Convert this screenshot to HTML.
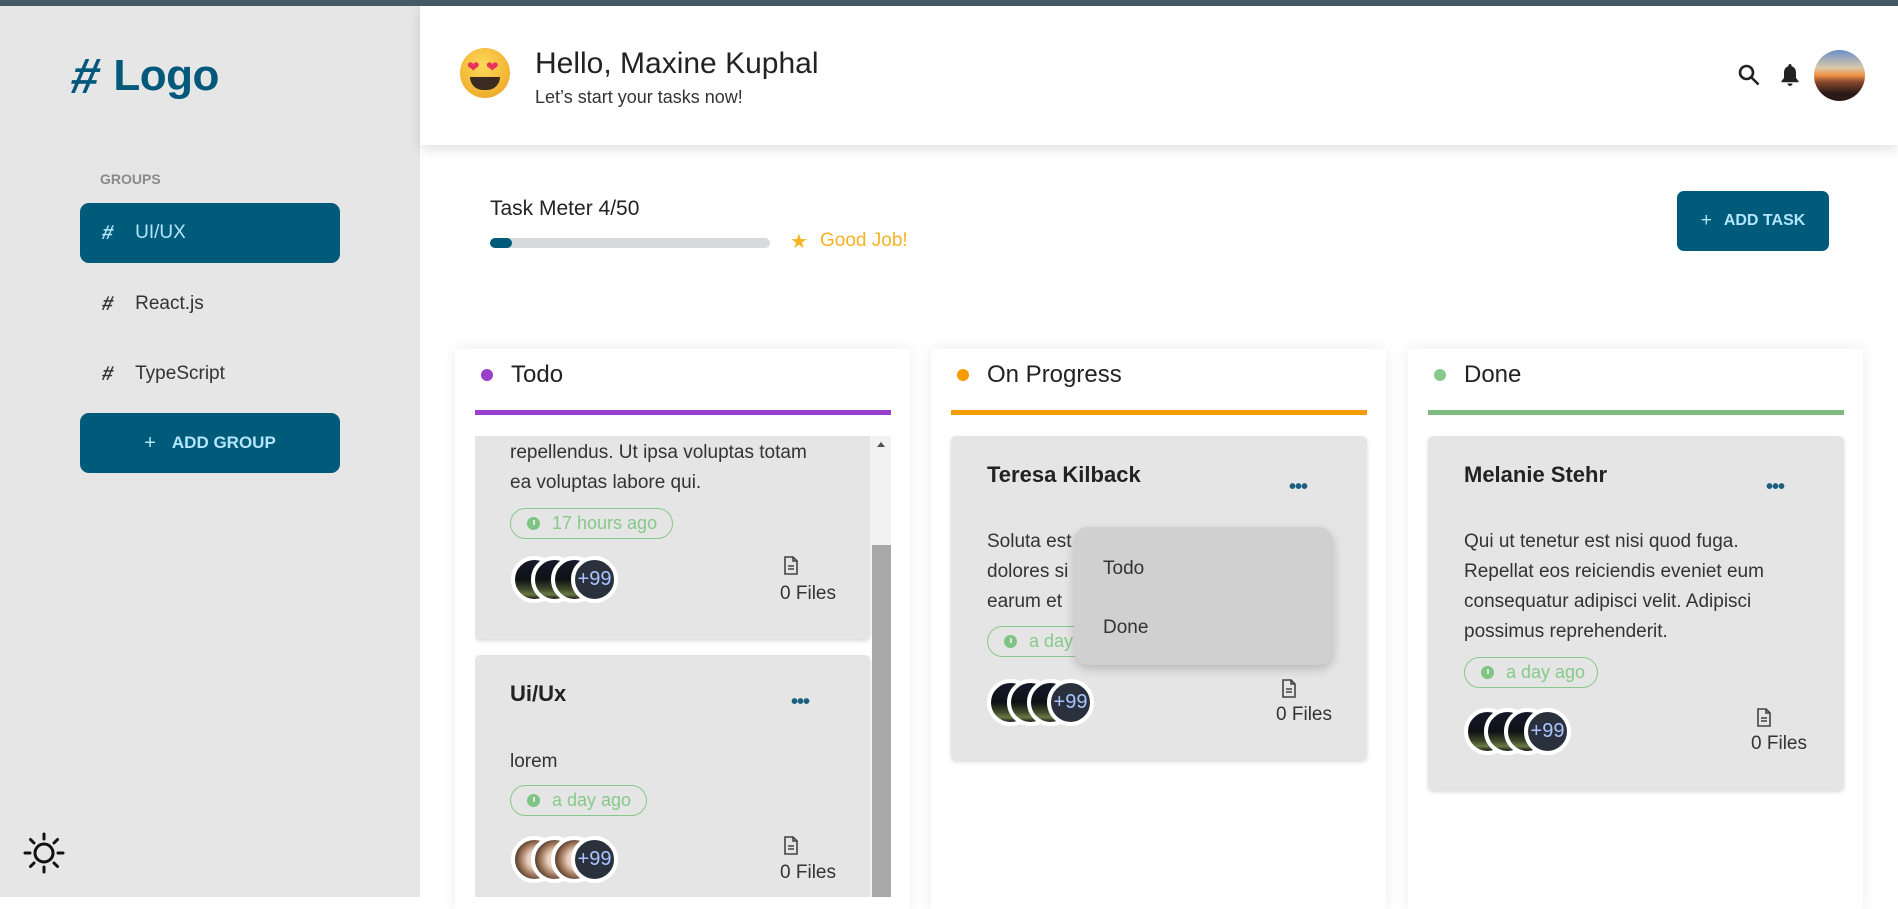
<!DOCTYPE html>
<html><head><meta charset="utf-8"><style>
*{box-sizing:border-box;margin:0;padding:0}
body{width:1898px;height:897px;overflow:hidden;background:#fff;font-family:"Liberation Sans",sans-serif;position:relative;color:#222}
.abs{position:absolute}
.topbar{left:0;top:0;width:1898px;height:6px;background:#455a64}
.side{left:0;top:6px;width:420px;height:891px;background:#e6e6e6}
.logo{left:72px;top:47px;font-size:44px;font-weight:bold;color:#00587a;letter-spacing:-0.5px;display:flex;align-items:center;gap:14px}
.groups{left:100px;top:171px;font-size:14px;font-weight:bold;color:#8a8a8a}
.gbtn{left:80px;width:260px;height:60px;border-radius:9px}
.gsel{background:#005a7a;color:#b3e5fc}
.gitem{font-size:19px;display:flex;align-items:center;padding-left:22px;gap:22px;color:#333}
.gsel.gitem{color:#b3e5fc}
.addg{background:#005a7a;color:#b3e5fc;font-weight:bold;font-size:17px;display:flex;align-items:center;justify-content:center;gap:16px}
.header{left:420px;top:6px;width:1478px;height:139px;background:#fff;box-shadow:0 4px 12px rgba(0,0,0,.12)}
.col{background:#fff;box-shadow:0 0 14px rgba(0,0,0,.08);top:349px;height:560px;width:455px}
.ctitle{font-size:24px;color:#222}
.dot{width:12px;height:12px;border-radius:50%}
.uline{height:5px;width:416px;top:410px}
.card{background:#e5e5e5;border-radius:5px;box-shadow:0 2px 4px rgba(0,0,0,.15);width:416px}
.ttl{font-size:22px;font-weight:bold;color:#222}
.body{font-size:19px;line-height:30px;color:#333;white-space:nowrap}
.chip{height:31px;border:1.5px solid #86c98a;border-radius:16px;color:#86c98a;font-size:18px;display:flex;align-items:center;padding-left:16px;gap:12px}
.clock{width:13px;height:13px;border-radius:50%;background:#7ec483;position:relative}
.clock:after{content:"";position:absolute;left:6px;top:3px;width:2px;height:5px;background:#e5e5e5}
.av{position:absolute;width:47px;height:47px;border-radius:50%;border:4px solid #fff;background:linear-gradient(180deg,#151a2a 0%,#0e1115 50%,#3f4a2a 75%,#6a7a45 88%,#1a1a1a 100%)}
.av.pl{background:#2a313d;color:#a9c4ff;font-size:20px;display:flex;align-items:center;justify-content:center}
.av.pp{background:radial-gradient(circle at 55% 50%,#e9d2c2 0 30%,#a0765a 55%,#3a2a22 80%)}
.files{font-size:19px;color:#333;text-align:center;width:70px}
.dots{font-size:20px;color:#1b5f80;font-weight:bold;letter-spacing:-1px}
.hs{font-weight:bold;font-size:20px;display:inline-block;transform:skewX(-12deg)}
</style></head><body>
<div class="abs topbar"></div>
<div class="abs side"></div>
<div class="abs logo"><span style="font-size:50px;transform:skewX(-12deg);display:inline-block">#</span>Logo</div>
<div class="abs groups">GROUPS</div>
<div class="abs gbtn gsel gitem" style="top:203px"><span class="hs">#</span>UI/UX</div>
<div class="abs gbtn gitem" style="top:274px"><span class="hs">#</span>React.js</div>
<div class="abs gbtn gitem" style="top:344px"><span class="hs">#</span>TypeScript</div>
<div class="abs gbtn addg" style="top:413px"><span style="font-weight:normal;font-size:20px">+</span>ADD GROUP</div>
<svg class="abs" style="left:22px;top:831px" width="44" height="44" viewBox="0 0 44 44" fill="none" stroke="#111" stroke-width="3" stroke-linecap="round"><circle cx="22" cy="22" r="9"/><path d="M22 3v5M22 36v5M3 22h5M36 22h5M8.5 8.5l3.5 3.5M32 32l3.5 3.5M8.5 35.5l3.5-3.5M32 12l3.5-3.5"/></svg>

<div class="abs header"></div>
<div class="abs" style="left:460px;top:48px;width:50px;height:50px;border-radius:50%;background:radial-gradient(circle at 45% 35%,#ffd95a,#f0b030 70%,#d89a20)"></div>
<div class="abs" style="left:467px;top:58px;font-size:15px;color:#e8325a">❤</div>
<div class="abs" style="left:486px;top:58px;font-size:15px;color:#e8325a">❤</div>
<div class="abs" style="left:470px;top:77px;width:30px;height:13px;border-radius:0 0 15px 15px;background:#3a2a20"></div>
<div class="abs" style="left:535px;top:47px;font-size:30px;color:#222">Hello, Maxine Kuphal</div>
<div class="abs" style="left:535px;top:87px;font-size:18px;color:#333">Let’s start your tasks now!</div>
<svg class="abs" style="left:1737px;top:63px" width="24" height="24" viewBox="0 0 24 24" fill="none" stroke="#222" stroke-width="2.6"><circle cx="9.5" cy="9.5" r="6.5"/><path d="M14.5 14.5l7 7"/></svg>
<svg class="abs" style="left:1778px;top:62px" width="24" height="26" viewBox="0 0 24 26" fill="#222"><path d="M12 2c-1 0-1.6.7-1.6 1.6v.6C7.5 5 6 7.5 6 10.5v5.5L3.5 19v1.3h17V19L18 16v-5.5c0-3-1.5-5.5-4.4-6.3v-.6C13.6 2.7 13 2 12 2zM9.5 21.5a2.5 2.5 0 005 0z"/></svg>
<div class="abs" style="left:1814px;top:50px;width:51px;height:51px;border-radius:50%;background:linear-gradient(180deg,#6c8fc8 0%,#d9c9a8 35%,#f09040 50%,#8a4a30 62%,#2a1a16 85%)"></div>

<div class="abs" style="left:490px;top:197px;font-size:21px;color:#222">Task Meter 4/50</div>
<div class="abs" style="left:490px;top:238px;width:280px;height:10px;border-radius:5px;background:#d9dadc"></div>
<div class="abs" style="left:490px;top:238px;width:22px;height:10px;border-radius:5px;background:#005a7a"></div>
<div class="abs" style="left:790px;top:229px;font-size:20px;color:#f5b324">★</div>
<div class="abs" style="left:820px;top:230px;font-size:19px;color:#f5b324">Good Job!</div>
<div class="abs" style="left:1677px;top:191px;width:152px;height:60px;border-radius:7px;background:#005a7a;color:#b3e5fc;font-weight:bold;font-size:16px;display:flex;align-items:center;justify-content:center;gap:12px"><span style="font-weight:normal;font-size:19px">+</span>ADD TASK</div>

<div class="abs col" style="left:455px"></div>
<div class="abs col" style="left:931px"></div>
<div class="abs col" style="left:1408px"></div>

<div class="abs dot" style="left:481px;top:369px;background:#9a3fcc"></div>
<div class="abs ctitle" style="left:511px;top:361px">Todo</div>
<div class="abs uline" style="left:475px;background:#9a3fcc"></div>
<div class="abs dot" style="left:957px;top:369px;background:#f59c00"></div>
<div class="abs ctitle" style="left:987px;top:361px">On Progress</div>
<div class="abs uline" style="left:951px;background:#f59c00"></div>
<div class="abs dot" style="left:1434px;top:369px;background:#86c98a"></div>
<div class="abs ctitle" style="left:1464px;top:361px">Done</div>
<div class="abs uline" style="left:1428px;background:#7fba7f"></div>

<div class="abs" style="left:475px;top:436px;width:416px;height:461px;overflow:hidden">
  <div class="abs card" style="left:0;top:-60px;width:395px;height:263px">
    <div class="abs body" style="left:35px;top:62px">repellendus. Ut ipsa voluptas totam<br>ea voluptas labore qui.</div>
    <div class="abs chip" style="left:35px;top:132px;width:163px"><span class="clock"></span>17 hours ago</div>
    <div class="abs av" style="left:36px;top:180px"></div><div class="abs av" style="left:56px;top:180px"></div><div class="abs av" style="left:76px;top:180px"></div><div class="abs av pl" style="left:96px;top:180px">+99</div>
    <svg class="abs" style="left:308px;top:180px" width="16" height="19" viewBox="0 0 16 19" fill="none" stroke="#444" stroke-width="1.6"><path d="M2 1h8l4 4v13H2z M10 1v4h4 M5 10h6M5 13h6"/></svg>
    <div class="abs files" style="left:298px;top:207px">0 Files</div>
  </div>
  <div class="abs card" style="left:0;top:219px;width:395px;height:260px">
    <div class="abs ttl" style="left:35px;top:26px">Ui/Ux</div>
    <div class="abs dots" style="left:316px;top:36px">•••</div>
    <div class="abs body" style="left:35px;top:92px">lorem</div>
    <div class="abs chip" style="left:35px;top:130px;width:137px"><span class="clock"></span>a day ago</div>
    <div class="abs av pp" style="left:36px;top:181px"></div><div class="abs av pp" style="left:56px;top:181px"></div><div class="abs av pp" style="left:76px;top:181px"></div><div class="abs av pl" style="left:96px;top:181px">+99</div>
    <svg class="abs" style="left:308px;top:181px" width="16" height="19" viewBox="0 0 16 19" fill="none" stroke="#444" stroke-width="1.6"><path d="M2 1h8l4 4v13H2z M10 1v4h4 M5 10h6M5 13h6"/></svg>
    <div class="abs files" style="left:298px;top:207px">0 Files</div>
  </div>
  <div class="abs" style="left:397px;top:0;width:19px;height:461px;background:#f1f1f1"></div>
  <div class="abs" style="left:397px;top:109px;width:19px;height:352px;background:#a8a8a8"></div>
  <div class="abs" style="left:402px;top:6px;width:0;height:0;border-left:4px solid transparent;border-right:4px solid transparent;border-bottom:5px solid #505050"></div>
</div>

<div class="abs card" style="left:951px;top:436px;height:324px">
  <div class="abs ttl" style="left:36px;top:26px">Teresa Kilback</div>
  <div class="abs dots" style="left:338px;top:40px">•••</div>
  <div class="abs body" style="left:36px;top:91px">Soluta est<br>dolores si<br>earum et</div>
  <div class="abs chip" style="left:36px;top:190px;width:140px"><span class="clock"></span>a day ago</div>
  <div class="abs av" style="left:36px;top:243px"></div><div class="abs av" style="left:56px;top:243px"></div><div class="abs av" style="left:76px;top:243px"></div><div class="abs av pl" style="left:96px;top:243px">+99</div>
  <svg class="abs" style="left:330px;top:243px" width="16" height="19" viewBox="0 0 16 19" fill="none" stroke="#444" stroke-width="1.6"><path d="M2 1h8l4 4v13H2z M10 1v4h4 M5 10h6M5 13h6"/></svg>
  <div class="abs files" style="left:318px;top:268px">0 Files</div>
</div>
<div class="abs" style="left:1074px;top:527px;width:259px;height:138px;border-radius:14px;background:#d0d0d0;box-shadow:0 4px 10px rgba(0,0,0,.2)">
  <div class="abs body" style="left:29px;top:27px">Todo</div>
  <div class="abs body" style="left:29px;top:86px">Done</div>
</div>

<div class="abs card" style="left:1428px;top:436px;height:354px">
  <div class="abs ttl" style="left:36px;top:26px">Melanie Stehr</div>
  <div class="abs dots" style="left:338px;top:40px">•••</div>
  <div class="abs body" style="left:36px;top:91px">Qui ut tenetur est nisi quod fuga.<br>Repellat eos reiciendis eveniet eum<br>consequatur adipisci velit. Adipisci<br>possimus reprehenderit.</div>
  <div class="abs chip" style="left:36px;top:221px;width:134px"><span class="clock"></span>a day ago</div>
  <div class="abs av" style="left:36px;top:272px"></div><div class="abs av" style="left:56px;top:272px"></div><div class="abs av" style="left:76px;top:272px"></div><div class="abs av pl" style="left:96px;top:272px">+99</div>
  <svg class="abs" style="left:328px;top:272px" width="16" height="19" viewBox="0 0 16 19" fill="none" stroke="#444" stroke-width="1.6"><path d="M2 1h8l4 4v13H2z M10 1v4h4 M5 10h6M5 13h6"/></svg>
  <div class="abs files" style="left:316px;top:297px">0 Files</div>
</div>
</body></html>
